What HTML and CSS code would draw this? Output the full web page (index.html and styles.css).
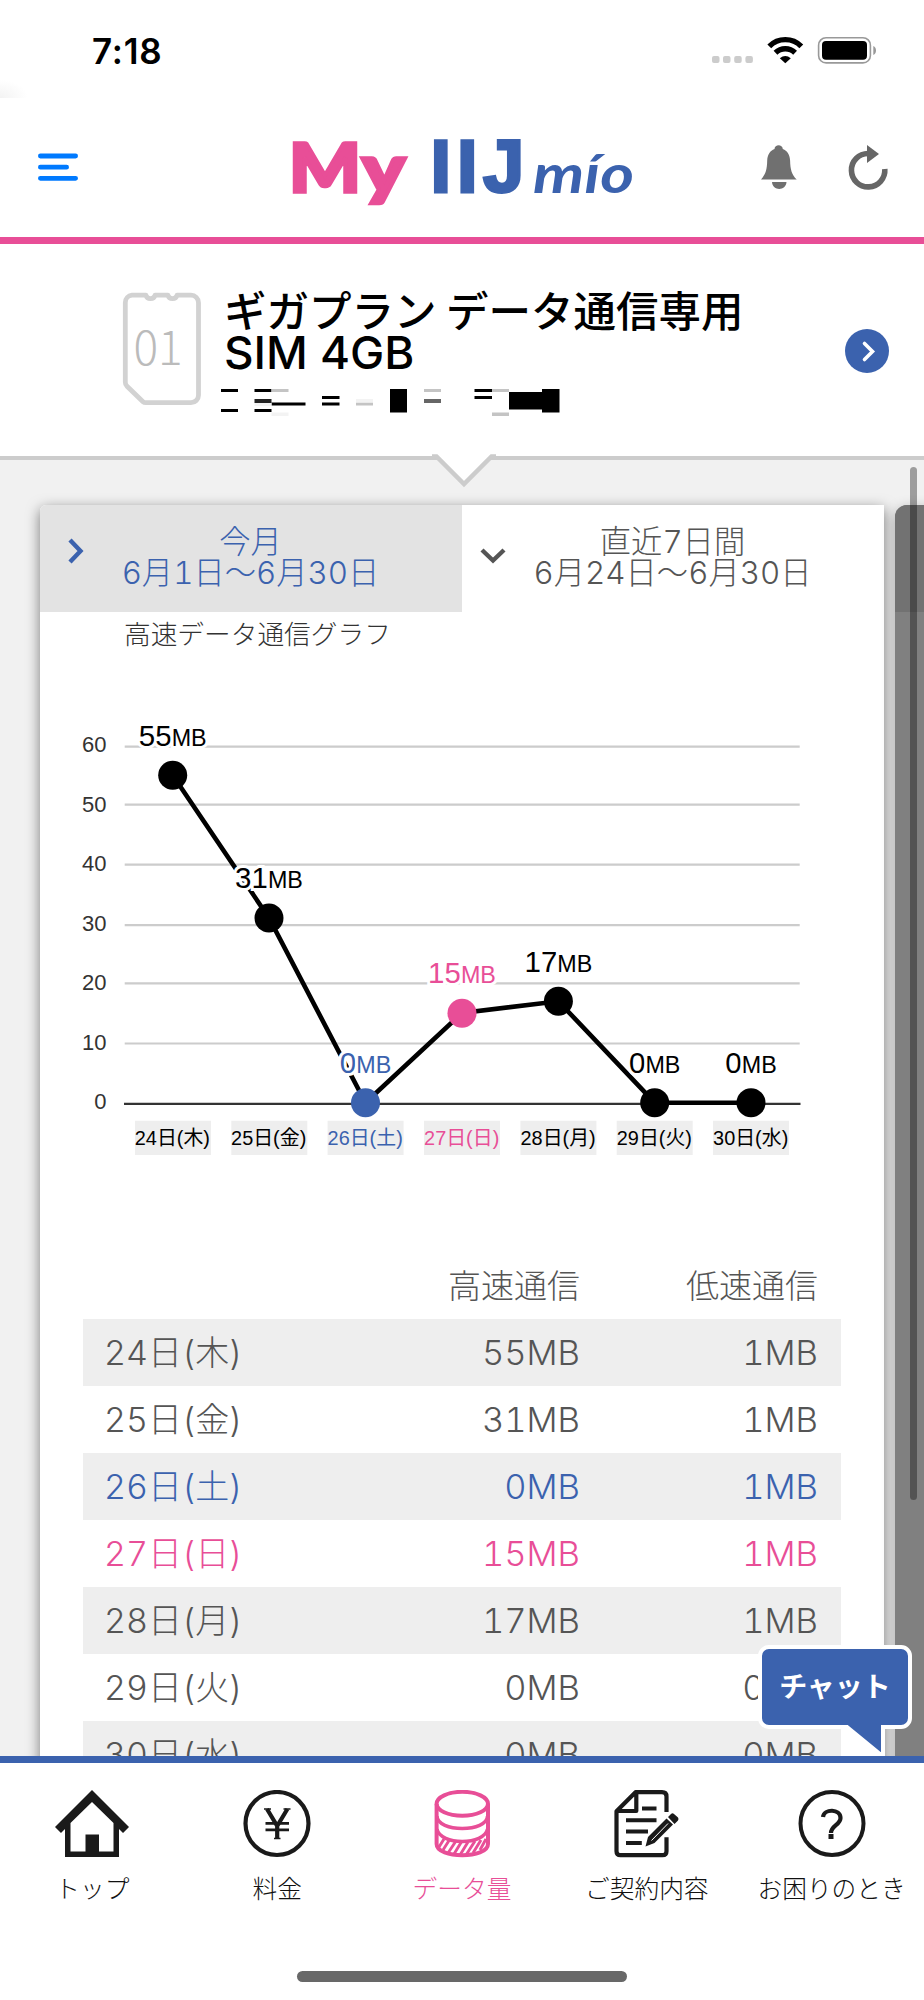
FILE: index.html
```html
<!DOCTYPE html>
<html lang="ja">
<head>
  <meta charset="UTF-8">
  <meta name="viewport" content="width=device-width, initial-scale=1.0">
  <title>My IIJmio</title>
  <link rel="stylesheet" href="styles.css">
</head>
<body>
  <div class="screen">
    <!--STATUS BAR-->
    <div class="status-bar">
      <span class="clock">7:18</span>
      <svg class="status-icons" viewBox="710 34 168 32" width="168" height="32">
        <g fill="#ccc">
          <rect x="712" y="56" width="7.5" height="7" rx="2"/>
          <rect x="723" y="56" width="7.5" height="7" rx="2"/>
          <rect x="734.2" y="56" width="7.5" height="7" rx="2"/>
          <rect x="745.4" y="56" width="7.5" height="7" rx="2"/>
        </g>
        <g fill="none" stroke="#000" stroke-width="5.4">
          <path d="M769.3 46.3a22.5 22.5 0 0 1 32 0"/>
          <path d="M775.5 52.7a14 14 0 0 1 19.6 0"/>
        </g>
        <path d="M779.8 58.3q5.5-4.6 11 0l-5.5 5z"/>
        <rect x="818.6" y="37.7" width="51.8" height="25.2" rx="7.5" fill="none" stroke="#999" stroke-width="1.6"/>
        <rect x="822" y="41" width="45" height="18.8" rx="4"/>
        <path d="M873.3 46c3.6 1.5 3.6 7.5 0 9z" fill="#999"/>
      </svg>
    </div>

    <!--HEADER-->
    <div class="header">
      <svg class="menu" width="40" height="28" viewBox="0 0 40 28" fill="none" stroke="#007aff" stroke-width="4.8" stroke-linecap="round">
        <path d="M2.4 3h35.2M2.4 14.2h26.2M2.4 25.3h35.2"/>
      </svg>
      <svg class="logo" viewBox="288 110 350 120" width="350" height="120">
        <text class="logo-my" x="289" y="191.5" textLength="72" lengthAdjust="spacingAndGlyphs">M</text>
        <text class="logo-my" x="362" y="191.5" textLength="43" lengthAdjust="spacingAndGlyphs">y</text>
        <text class="logo-iij" x="430.5 457 483" y="191.5">IIJ</text>
        <text class="logo-mio" x="533" y="192.5" textLength="101" lengthAdjust="spacingAndGlyphs">mío</text>
      </svg>
      <svg class="header-icons" viewBox="760 143 130 50" width="130" height="50">
        <path fill="#707070" d="M761 179.5c4.5-5 6-9.5 6.2-19 .3-6 2.8-9.8 7.3-11.5.2-5 8-5 8.3 0 4.5 1.7 7 5.5 7.3 11.5.2 9.500 1.700 14 6.600 19zM772 182h14.500c-.6 9.300-13.900 9.300-14.500 0z"/>
        <path fill="none" stroke="#666" stroke-width="5.6" d="M884.800 169a16.700 16.700 0 1 1-16.700-15.500"/>
        <path fill="#666" d="M867 145l12 9-12 9z"/>
      </svg>
    </div>

    <!--SIM-->
    <div class="sim">
      <svg class="sim-card" viewBox="122 292 80 114" width="80" height="114">
        <path fill="none" stroke="#d2d2d2" stroke-width="4.8" stroke-linejoin="round" d="M132 295.200h14c1 4.500 8 4.500 9 0h13c1 4.500 8 4.500 9 0h14a7.500 7.500 0 0 1 7.500 7.500v92.500a7.500 7.500 0 0 1-7.500 7.500h-45q-2 0-3-1l-16-15.500q-1.700-1.700-1.700-4v-79.500a7.500 7.500 0 0 1 6.700-7.500z"/>
        <text class="sim-number" x="158" y="365" text-anchor="middle">01</text>
      </svg>
      <div class="sim-info">
        <div class="sim-name">ギガプラン データ通信専用<br><span class="sim-name-en">SIM 4GB</span></div>
        <svg class="masked" viewBox="221 388 340 30" width="340" height="30">
          <path d="M221 389h17v3h-17zM221 409h17v3h-17zM254.500 389h17v3h-17zM254.500 409h17v3h-17zM271.500 402.500h34v3h-34zM322 396h17.500v3h-17.500zM322 402.500h17.500v3h-17.500zM390 389h17v23.500h-17zM474.500 389h17.500v3h-17.500zM474.500 396h17.500v3h-17.500zM509 392h34v17.500h-34zM542 389h17.500v23.500h-17.500z"/>
          <path fill="#222" d="M254.500 399h17v4h-17z"/>
          <path fill="#666" d="M424 399h17v4h-17z"/>
          <path fill="#c4c4c4" d="M271.500 389h17v3h-17zM356 402.500h17v3h-17zM424 389h17v3h-17zM492 389h17v3h-17zM492 412.500h17v3.500h-17z"/>
          <path fill="#f3f3f3" d="M271.500 412.500h17v3.500h-17zM356 399h17v3.500h-17zM254.500 403h17v3h-17z"/>
        </svg>
      </div>
      <svg class="sim-next" width="44" height="44" viewBox="0 0 44 44">
        <circle cx="22" cy="22" r="22" fill="#3b62ae"/>
        <path d="M19.500 14.500l8 8-8 8" fill="none" stroke="#fff" stroke-width="3.600" stroke-linecap="round"/>
      </svg>
      <svg class="notch" width="64" height="36" viewBox="432 454 64 36">
        <path d="M432 454h64v3.500h-4.500l-27.500 27.500-27.500-27.500h-4.500z" fill="#fff"/>
        <path d="M432 457.500h4.500l27.500 27.500 27.500-27.500h4.500" fill="none" stroke="#ccc" stroke-width="4.500"/>
      </svg>
    </div>

    <!--DATA-->
    <div class="content">
      <div class="card">
        <div class="tabs">
          <div class="tab tab-month">
            <svg class="chevron-right" width="16" height="26" viewBox="0 0 16 26"><path d="M2 2l10.500 11L2 24" fill="none" stroke="currentColor" stroke-width="4.400"/></svg>
            <div>今月<br>6月1日〜6月30日</div>
          </div>
          <div class="tab tab-week">
            <svg class="chevron-down" width="26" height="16" viewBox="0 0 26 16"><path d="M2 2l11 10.500L24 2" fill="none" stroke="currentColor" stroke-width="4.400"/></svg>
            <div>直近7日間<br>6月24日〜6月30日</div>
          </div>
        </div>
        <div class="graph-title">高速データ通信グラフ</div>
        <svg class="graph" viewBox="40 700 844 480" width="844" height="480">
          <path class="grid" d="M124.700 746.700h675M124.700 804.700h675M124.700 864.700h675M124.700 925.200h675M124.700 983.300h675M124.700 1043.500h675"/>
          <path class="axis" d="M124 1103.800h676.500"/>
          <g class="scale">
            <text x="106.500" y="752">60</text>
            <text x="106.500" y="811.500">50</text>
            <text x="106.500" y="870.500">40</text>
            <text x="106.500" y="930.500">30</text>
            <text x="106.500" y="989.700">20</text>
            <text x="106.500" y="1049.500">10</text>
            <text x="106.500" y="1108.500">0</text>
          </g>
          <path class="line" d="M172.700 775.300L269 918l96.500 184.700 96.500-89.700 96.400-11.700 96.300 101.400H751"/>
          <g class="dots">
            <circle cx="172.700" cy="775.300" r="14.500"/>
            <circle cx="269" cy="918" r="14.500"/>
            <circle class="sat" cx="365.500" cy="1102.700" r="14.500"/>
            <circle class="sun" cx="462" cy="1013.300" r="14.500"/>
            <circle cx="558.400" cy="1001.300" r="14.500"/>
            <circle cx="654.700" cy="1102.700" r="14.500"/>
            <circle cx="751" cy="1102.700" r="14.500"/>
          </g>
          <g class="values">
            <text x="172.700" y="745.500">55<tspan class="unit">MB</tspan></text>
            <text x="269" y="888">31<tspan class="unit">MB</tspan></text>
            <text class="sat" x="365.500" y="1072.500">0<tspan class="unit">MB</tspan></text>
            <text class="sun" x="462" y="983">15<tspan class="unit">MB</tspan></text>
            <text x="558.400" y="971.500">17<tspan class="unit">MB</tspan></text>
            <text x="654.700" y="1072.500">0<tspan class="unit">MB</tspan></text>
            <text x="751" y="1072.500">0<tspan class="unit">MB</tspan></text>
          </g>
          <path fill="#eee" d="M135 1120.700h76v34.300h-76zM231.300 1120.700h76v34.300h-76zM327.600 1120.700h76v34.300h-76zM424 1120.700h76v34.300h-76zM520.400 1120.700h76v34.300h-76zM616.700 1120.700h76v34.300h-76zM713 1120.700h76v34.300h-76z"/>
          <g class="days">
            <text x="172.400" y="1145">24日(木)</text>
            <text x="268.700" y="1145">25日(金)</text>
            <text class="sat" x="365.200" y="1145">26日(土)</text>
            <text class="sun" x="461.700" y="1145">27日(日)</text>
            <text x="558.100" y="1145">28日(月)</text>
            <text x="654.400" y="1145">29日(火)</text>
            <text x="750.700" y="1145">30日(水)</text>
          </g>
        </svg>
        <table class="usage">
          <tr class="usage-head"><th></th><th>高速通信</th><th>低速通信</th></tr>
          <tr><td>24日(木)</td><td>55MB</td><td>1MB</td></tr>
          <tr><td>25日(金)</td><td>31MB</td><td>1MB</td></tr>
          <tr class="sat"><td>26日(土)</td><td>0MB</td><td>1MB</td></tr>
          <tr class="sun"><td>27日(日)</td><td>15MB</td><td>1MB</td></tr>
          <tr><td>28日(月)</td><td>17MB</td><td>1MB</td></tr>
          <tr><td>29日(火)</td><td>0MB</td><td>0MB</td></tr>
          <tr><td>30日(水)</td><td>0MB</td><td>0MB</td></tr>
        </table>
      </div>
      <div class="next-card"><div class="next-tab"></div></div>
      <div class="scrollbar"></div>
      <div class="chat">
        <svg width="156" height="112" viewBox="757 1644 156 112">
          <path d="M769.500 1647h131a9 9 0 0 1 9.500 9.500v61a9 9 0 0 1-9.500 9.500h-17.500v27h-3l-33-27h-77.500a9 9 0 0 1-9.500-9.500v-61a9 9 0 0 1 9.500-9.500z" fill="#3b62ae" stroke="#fff" stroke-width="4"/>
        </svg>
        <span>チャット</span>
      </div>
    </div>

    <!--NAVIGATION-->
    <div class="nav">
      <div class="nav-item">
        <svg width="74" height="68" viewBox="55.700 1790 74 68">
          <path d="M92.700 1790l37 37-6 6-4-4v28h-54v-28l-4 4-6-6zM92.700 1802l-21.500 21v28.500h15v-17h13.500v17h14.500v-28.500z" fill="#1a1a1a" fill-rule="evenodd"/>
        </svg>
        <span>トップ</span>
      </div>
      <div class="nav-item">
        <svg width="68" height="68" viewBox="243 1790 68 68" fill="none" stroke="#1a1a1a">
          <circle cx="277" cy="1823.500" r="31.500" stroke-width="4.200"/>
          <path stroke-width="4.200" d="M267 1809l10.200 17 10.200-17M277.200 1824v14.500"/>
          <path stroke-width="2.800" d="M265.500 1823.400h23.500M265.500 1829.800h23.500"/>
          <path stroke-width="1.500" d="M264 1809h7M283.500 1809h7M274 1838.500h6.500"/>
        </svg>
        <span>料金</span>
      </div>
      <div class="nav-item active">
        <svg width="60" height="68" viewBox="432 1790 60 68" fill="none" stroke="#e84e97" stroke-width="4">
          <path d="M436.600 1804v40c0 15 51.400 15 51.400 0v-40"/>
          <ellipse cx="462.300" cy="1803.800" rx="25.700" ry="12"/>
          <path stroke-width="3.500" d="M437 1816c0 16.500 50.500 16.500 50.500 0M437 1829c3 16.500 47.500 16.500 50.500 0"/>
          <path stroke-width="2.900" d="M439 1847l5-8M443 1850l7-11M448 1853l8-12M454 1854l8-13M460 1855l8-13M466 1855l9-14M473 1853l8-13M480 1850l6-11"/>
        </svg>
        <span>データ量</span>
      </div>
      <div class="nav-item">
        <svg width="66" height="68" viewBox="614 1790 66 68" fill="none" stroke="#1a1a1a" stroke-width="4.200">
          <path d="M666.500 1812v-15.500q0-4.300-4.500-4.300h-26.500l-19 19v40q0 4 4 4h42q4 0 4-4v-14M636.300 1792.500v18.500h-19.500" stroke-linejoin="round"/>
          <path d="M642 1808.500h14.500M626 1820.200h30.500M626 1831.500h22M626 1843h15.800" stroke-width="4"/>
          <path d="M645.500 1846.500l2.500-9.500 18.500-18.500 6.500 6-18.500 18.500zM668 1817l3-3q1.500-1.300 3 0l4 3.500q1 1.500 0 3l-3.500 3.500z" fill="#1a1a1a" stroke="none"/>
          <path d="M651.500 1840.500l16.500-17" stroke="#fff" stroke-width="1"/>
        </svg>
        <span>ご契約内容</span>
      </div>
      <div class="nav-item">
        <svg width="68" height="68" viewBox="797 1790 68 68">
          <circle cx="831" cy="1823.500" r="31.500" fill="none" stroke="#1a1a1a" stroke-width="4"/>
          <path d="M822 1817c1-8.500 17.500-8.500 17.500 1 0 7-9.500 7.500-9.500 15" fill="none" stroke="#1a1a1a" stroke-width="4.200"/>
          <rect x="827.500" y="1834" width="5" height="5" fill="#1a1a1a"/>
        </svg>
        <span>お困りのとき</span>
      </div>
    </div>
    <div class="home-indicator"></div>
  </div>
</body>
</html>
```

FILE: styles.css
```css
body {
  margin: 0;
  background: #fff;
  font-family: "Inter", "Noto Sans CJK JP", sans-serif;
  font-weight: 300;
  color: #555;
}
svg {
  display: block;
}
.screen {
  width: 924px;
  height: 2000px;
  overflow: hidden;
  display: flex;
  flex-direction: column;
}
.status-bar {
  height: 98px;
  box-sizing: border-box;
  padding: 34px 46px 0 92px;
  display: flex;
  justify-content: space-between;
  background: radial-gradient(ellipse 28px 18px at 0 100%, #f3f3f3, #fff);
}
.clock {
  font-size: 35px;
  font-weight: 600;
  line-height: 34px;
  letter-spacing: 0.8px;
  color: #000;
}
.header {
  height: 145.5px;
  box-sizing: border-box;
  border-bottom: 7px solid #e84e97;
  display: flex;
  align-items: flex-start;
}
.menu {
  margin: 55px 0 0 38px;
}
.logo {
  margin: 12px 0 0 210px;
}
.header-icons {
  margin: 45px 0 0 122px;
}
.logo-my {
  font-family: "Lato", sans-serif;
  font-weight: 900;
  font-size: 67px;
  fill: #e84e97;
  stroke: #e84e97;
  stroke-width: 3.5px;
}
.logo-iij {
  font-family: "Liberation Sans", sans-serif;
  font-weight: 700;
  font-size: 74px;
  fill: #3b62ae;
  stroke: #3b62ae;
  stroke-width: 3px;
}
.logo-mio {
  font-family: "Lato", cursive;
  font-style: italic;
  font-weight: 700;
  font-size: 54px;
  fill: #3b62ae;
}
.sim {
  position: relative;
  z-index: 1;
  height: 216.5px;
  box-sizing: border-box;
  border-bottom: 4.5px solid #ccc;
  display: flex;
  align-items: flex-start;
}
.sim-card {
  margin: 48px 0 0 122px;
}
.sim-number {
  font-family: "Noto Sans CJK JP", sans-serif;
  font-weight: 300;
  font-size: 46px;
  fill: #bbb;
}
.sim-info {
  width: 600px;
  margin: 44px 0 0 19px;
}
.sim-name {
  height: 86px;
  margin-left: 3px;
  font-family: "Noto Sans CJK JP", sans-serif;
  font-size: 42.5px;
  font-weight: 500;
  line-height: 42.6px;
  color: #000;
  white-space: nowrap;
}
.sim-name-en {
  font-family: "Inter", sans-serif;
  font-size: 45.8px;
}
.masked {
  margin-top: 14px;
}
.sim-next {
  margin: 85px 0 0 24px;
}
.notch {
  position: absolute;
  left: 432px;
  top: 209.5px;
}
.content {
  position: relative;
  height: 1296px;
  box-sizing: border-box;
  padding: 44.5px 0 0 40px;
  background: #f1f1f1;
  overflow: hidden;
  display: flex;
  align-items: flex-start;
  gap: 11px;
}
.card {
  width: 844px;
  height: 1400px;
  flex: none;
  background: #fff;
  border-radius: 6px 0 0 0;
  box-shadow: 0 4px 14px rgba(0, 0, 0, 0.5);
}
.tabs {
  display: flex;
  height: 107px;
  font-size: 31.3px;
  line-height: 31.5px;
  text-align: center;
}
.tab {
  position: relative;
  width: 422px;
  box-sizing: border-box;
  padding-top: 22px;
  padding-right: 1px;
  white-space: nowrap;
  font-feature-settings: "tnum";
}
.tab-month {
  background: #e3e3e3;
  border-radius: 6px 0 0 0;
  color: #3b62ae;
}
.tab-week {
  color: #555;
}
.chevron-right {
  position: absolute;
  left: 28px;
  top: 33px;
}
.chevron-down {
  position: absolute;
  left: 18px;
  top: 43px;
}
.graph-title {
  margin-left: 84px;
  height: 88.5px;
  font-size: 26.7px;
  line-height: 44px;
  color: #333;
}
.grid {
  stroke: #ccc;
  stroke-width: 2.2;
}
.axis {
  stroke: #333;
  stroke-width: 2.2;
}
.line {
  fill: none;
  stroke: #000;
  stroke-width: 4.6;
}
.graph text {
  font-family: "Liberation Sans", "Noto Sans CJK JP", sans-serif;
}
.scale {
  text-anchor: end;
  font-size: 22px;
  fill: #333;
}
.values {
  text-anchor: middle;
  font-size: 29.5px;
  fill: #000;
  stroke: #fff;
  stroke-width: 6px;
  paint-order: stroke;
}
.unit {
  font-size: 23.3px;
}
.days {
  text-anchor: middle;
  font-size: 19.9px;
  font-weight: 400;
  fill: #000;
}
.graph .sat {
  fill: #3b62ae;
}
.graph .sun {
  fill: #e84e97;
}
.usage {
  width: 758px;
  margin: 72px 0 0 43px;
  border-collapse: collapse;
  table-layout: fixed;
  font-size: 34.5px;
  line-height: 40px;
  font-feature-settings: "tnum";
}
.usage th, .usage td {
  height: 67px;
  padding: 0 23px 0 0;
  box-sizing: border-box;
  font-weight: 300;
  text-align: right;
}
.usage .usage-head th {
  font-size: 33px;
}
.usage td:first-child {
  padding-left: 21px;
  text-align: left;
  font-size: 34px;
}
.usage th:first-child {
  width: 270px;
}
.usage th:nth-child(2) {
  width: 250px;
}
.usage tr:nth-child(even) {
  background: #eee;
}
.usage .sat {
  color: #3b62ae;
}
.usage .sun {
  color: #e84e97;
}
.next-card {
  flex: none;
  width: 100px;
  height: 1400px;
  background: #808080;
  border-radius: 12px 0 0 0;
  box-shadow: 0 4px 14px rgba(0, 0, 0, 0.3);
  overflow: hidden;
}
.next-tab {
  height: 107px;
  background: #727272;
}
.scrollbar {
  position: absolute;
  left: 910px;
  top: 7px;
  width: 7px;
  height: 1033px;
  border-radius: 4px;
  background: rgba(0, 0, 0, 0.35);
}
.chat {
  position: absolute;
  left: 757px;
  top: 1184px;
}
.chat span {
  position: absolute;
  left: 0;
  top: 23px;
  width: 156px;
  text-align: center;
  font-size: 28px;
  line-height: 40px;
  font-weight: 700;
  color: #fff;
}
.nav {
  height: 168px;
  box-sizing: border-box;
  border-top: 7px solid #3b62ae;
  display: flex;
}
.nav-item {
  width: 20%;
  padding-top: 27px;
  display: flex;
  flex-direction: column;
  align-items: center;
  font-size: 24.7px;
  line-height: 30px;
  color: #111;
  white-space: nowrap;
}
.nav-item span {
  margin-top: 16px;
}
.nav .active {
  color: #e84e97;
}
.home-indicator {
  width: 330px;
  height: 11px;
  margin: 47px auto 0;
  border-radius: 6px;
  background: #686868;
}
```
